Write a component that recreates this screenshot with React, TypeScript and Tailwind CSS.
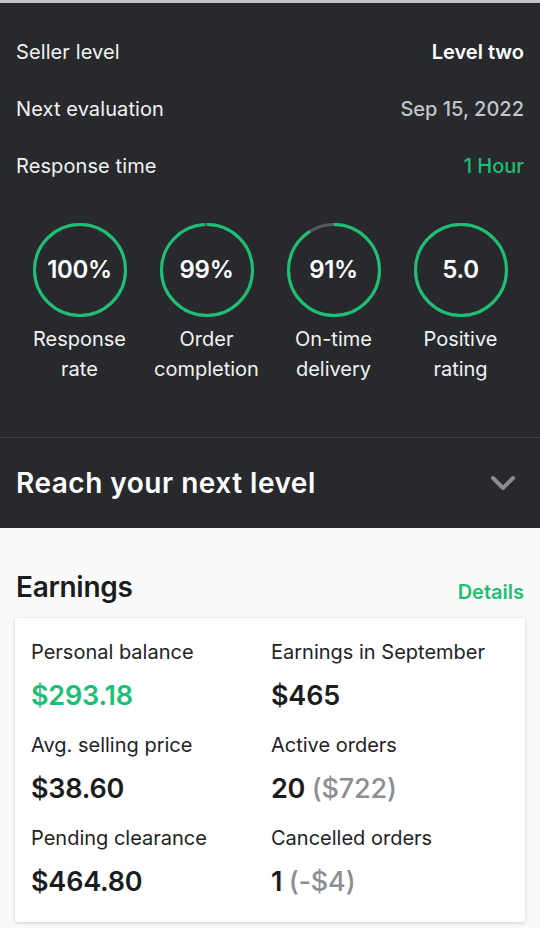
import React from "react";

const font = { fontFamily: "Inter, 'Noto Sans', sans-serif" };

interface StatRingProps {
  value: string;
  percent: number;
  label: [string, string];
}

function StatRing({ value, percent, label }: StatRingProps) {
  const r = 45.5;
  const circumference = 2 * Math.PI * r;
  const filled = (circumference * percent) / 100;

  return (
    <div className="flex flex-col items-center">
      <div className="relative h-[94px] w-[94px]">
        <svg width="94" height="94" viewBox="0 0 94 94" className="-rotate-90">
          <circle cx="47" cy="47" r={r} fill="none" stroke="#57585c" strokeWidth="3" />
          <circle
            cx="47"
            cy="47"
            r={r}
            fill="none"
            stroke="#1dbf73"
            strokeWidth="3"
            strokeDasharray={`${filled} ${circumference}`}
          />
        </svg>
        <div className="absolute inset-0 flex items-center justify-center text-[24px] font-semibold tracking-[-0.3px] text-white">
          {value}
        </div>
      </div>
      <div className="mt-[7px] text-center text-[20px] leading-[30px] text-[#f2f2f2]">
        <div>{label[0]}</div>
        <div>{label[1]}</div>
      </div>
    </div>
  );
}

interface InfoRowProps {
  label: string;
  children: React.ReactNode;
}

function InfoRow({ label, children }: InfoRowProps) {
  return (
    <div className="flex h-[57px] items-center justify-between text-[20px]">
      <span className="tracking-[0.1px] text-[#f2f2f2]">{label}</span>
      {children}
    </div>
  );
}

interface EarningItemProps {
  label: string;
  children: React.ReactNode;
}

function EarningItem({ label, children }: EarningItemProps) {
  return (
    <div>
      <div className="h-[28px] text-[20px] leading-[28px] text-[#222325]">{label}</div>
      <div className="mt-[12px] h-[36px] text-[27px] font-semibold leading-[36px] tracking-[-0.2px] text-[#1b1c1e]">
        {children}
      </div>
    </div>
  );
}

export default function App() {
  return (
    <div className="min-h-[928px] w-[540px] overflow-hidden bg-[#fafafa]" style={font}>
      <div className="h-[3px] bg-[#c4c4c4]" />

      {/* Level overview */}
      <div className="bg-[#28292d]">
        <div className="px-4 pt-[20px]">
          <InfoRow label="Seller level">
            <span className="font-semibold text-white">Level two</span>
          </InfoRow>
          <InfoRow label="Next evaluation">
            <span className="font-medium text-[#c3c4c7]">Sep 15, 2022</span>
          </InfoRow>
          <InfoRow label="Response time">
            <span className="font-medium text-[#1dbf73]">1 Hour</span>
          </InfoRow>

          <div className="mt-[29px] grid grid-cols-4 pb-[53px]">
            <StatRing value="100%" percent={100} label={["Response", "rate"]} />
            <StatRing value="99%" percent={99} label={["Order", "completion"]} />
            <StatRing value="91%" percent={91} label={["On-time", "delivery"]} />
            <StatRing value="5.0" percent={100} label={["Positive", "rating"]} />
          </div>
        </div>

        <div className="flex h-[91px] items-center justify-between border-t border-[#3d3e42] px-4">
          <span className="text-[28px] font-semibold tracking-[0.5px] text-white">Reach your next level</span>
          <svg width="26" height="16" viewBox="0 0 26 16" className="mr-[8px]">
            <polyline
              points="3,3 13,13 23,3"
              fill="none"
              stroke="#8b8c90"
              strokeWidth="4"
              strokeLinecap="round"
              strokeLinejoin="round"
            />
          </svg>
        </div>
      </div>

      {/* Earnings */}
      <div className="px-[15px] pt-[39px]">
        <div className="flex h-[40px] items-center justify-between pl-[1px] pr-[1px]">
          <span className="text-[28px] font-semibold tracking-[-0.3px] text-[#1b1c1e]">Earnings</span>
          <span className="mt-[9px] text-[20px] font-semibold text-[#1dbf73]">Details</span>
        </div>

        <div className="mt-[11px] rounded-[3px] bg-white pb-[22px] pl-4 pt-[20px] shadow-[0_1px_4px_rgba(0,0,0,0.18)]">
          <div className="grid grid-cols-[240px_1fr] gap-y-[17px]">
            <EarningItem label="Personal balance">
              <span className="text-[#1dbf73]">$293.18</span>
            </EarningItem>
            <EarningItem label="Earnings in September">$465</EarningItem>
            <EarningItem label="Avg. selling price">$38.60</EarningItem>
            <EarningItem label="Active orders">
              20 <span className="font-medium text-[#8d8e92]">($722)</span>
            </EarningItem>
            <EarningItem label="Pending clearance">$464.80</EarningItem>
            <EarningItem label="Cancelled orders">
              1 <span className="font-medium text-[#8d8e92]">(-$4)</span>
            </EarningItem>
          </div>
        </div>
      </div>
    </div>
  );
}
